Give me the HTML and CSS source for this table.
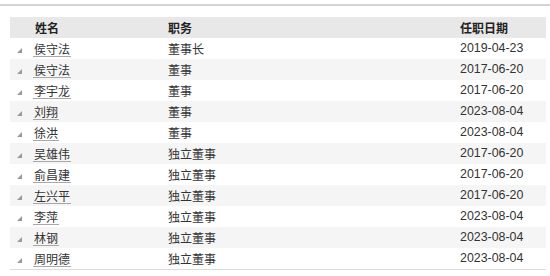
FILE: index.html
```html
<!DOCTYPE html>
<html lang="zh">
<head>
<meta charset="utf-8">
<link rel="stylesheet" href="styles.css">
</head>
<body>
<div class="topline"></div>
<div class="table">
  <div class="row head">
    <div class="cell"></div>
    <div class="cell">姓名</div>
    <div class="cell">职务</div>
    <div class="cell">任职日期</div>
  </div>
  <div class="row"><div class="cell"><span class="tri"></span></div><div class="cell"><span class="name">侯守法</span></div><div class="cell">董事长</div><div class="cell date">2019-04-23</div></div>
  <div class="row alt"><div class="cell"><span class="tri"></span></div><div class="cell"><span class="name">侯守法</span></div><div class="cell">董事</div><div class="cell date">2017-06-20</div></div>
  <div class="row"><div class="cell"><span class="tri"></span></div><div class="cell"><span class="name">李宇龙</span></div><div class="cell">董事</div><div class="cell date">2017-06-20</div></div>
  <div class="row alt"><div class="cell"><span class="tri"></span></div><div class="cell"><span class="name">刘翔</span></div><div class="cell">董事</div><div class="cell date">2023-08-04</div></div>
  <div class="row"><div class="cell"><span class="tri"></span></div><div class="cell"><span class="name">徐洪</span></div><div class="cell">董事</div><div class="cell date">2023-08-04</div></div>
  <div class="row alt"><div class="cell"><span class="tri"></span></div><div class="cell"><span class="name">吴雄伟</span></div><div class="cell">独立董事</div><div class="cell date">2017-06-20</div></div>
  <div class="row"><div class="cell"><span class="tri"></span></div><div class="cell"><span class="name">俞昌建</span></div><div class="cell">独立董事</div><div class="cell date">2017-06-20</div></div>
  <div class="row alt"><div class="cell"><span class="tri"></span></div><div class="cell"><span class="name">左兴平</span></div><div class="cell">独立董事</div><div class="cell date">2017-06-20</div></div>
  <div class="row"><div class="cell"><span class="tri"></span></div><div class="cell"><span class="name">李萍</span></div><div class="cell">独立董事</div><div class="cell date">2023-08-04</div></div>
  <div class="row alt"><div class="cell"><span class="tri"></span></div><div class="cell"><span class="name">林钢</span></div><div class="cell">独立董事</div><div class="cell date">2023-08-04</div></div>
  <div class="row"><div class="cell"><span class="tri"></span></div><div class="cell"><span class="name">周明德</span></div><div class="cell">独立董事</div><div class="cell date">2023-08-04</div></div>
</div>
</body>
</html>
```
FILE: styles.css
```css
html, body {
  margin: 0;
  padding: 0;
  background: #fff;
}
body {
  font-family: "Noto Sans CJK SC", "Liberation Sans", sans-serif;
  font-size: 12px;
  color: #333;
}
.topline {
  height: 0;
  border-top: 2px solid #d4d4d4;
  margin-top: 4px;
}
.table {
  margin: 11px 4px 0 10px;
  border-bottom: 1px solid #dcdcdc;
}
.row {
  display: grid;
  grid-template-columns: 25px 133px 292px 1fr;
  height: 21px;
  align-items: center;
}
.row.head {
  background: #e8e8e8;
  font-weight: bold;
  color: #222;
}
.row.alt {
  background: #f5f5f5;
}
.cell {
  line-height: 21px;
  white-space: nowrap;
}
.date {
  font-family: "Liberation Sans", sans-serif;
  font-size: 12.4px;
}
.tri {
  display: inline-block;
  width: 0;
  height: 0;
  margin-left: 7px;
  border-style: solid;
  border-width: 0 0 5px 5px;
  border-color: transparent transparent #999 transparent;
  vertical-align: middle;
}
.name {
  display: inline-block;
  line-height: 15px;
  padding: 0 1px;
  margin-left: -2px;
  border-bottom: 1px solid #a8a8a8;
}
```
